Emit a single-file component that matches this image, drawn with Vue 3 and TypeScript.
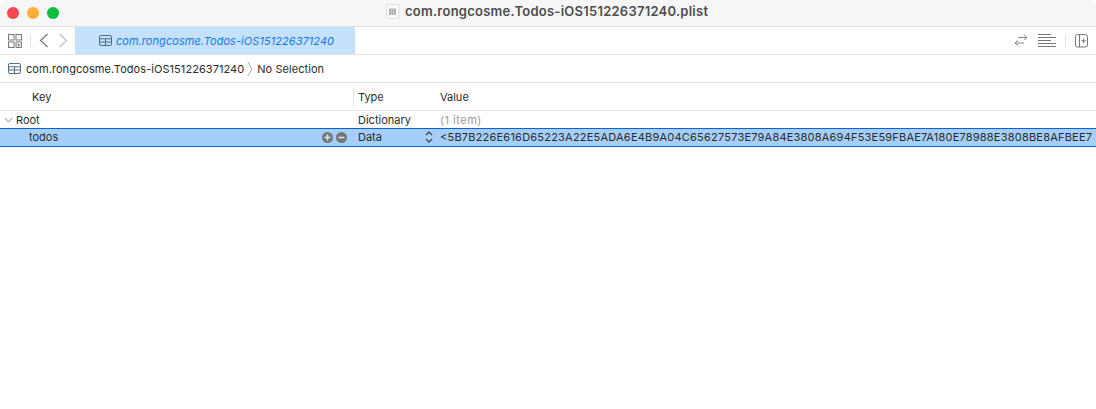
<script setup lang="ts">
const value = '<5B7B226E616D65223A22E5ADA6E4B9A04C65627573E79A84E3808A694F53E59FBAE7A180E78988E3808BE8AFBEE7'
const lights: string[] = ['#f8484e', '#fdae35', '#0fbc3c']
</script>

<template>
  <div class="win">
    <header class="title">
      <div class="lights"><i v-for="c in lights" :key="c" :style="{ background: c }"></i></div>
      <div class="title-c">
        <svg class="fileic" width="14" height="15" viewBox="0 0 14 15"><rect x=".5" y=".5" width="12.5" height="14" rx="1.5" fill="#fafafa" stroke="#dedede"/><rect x="3" y="4.5" width="7" height="6.5" fill="#b0b0b0"/><path d="M5.3 4.5V11M7.7 4.5V11" stroke="#cfcfcf"/></svg>
        <span>com.rongcosme.Todos-iOS151226371240.plist</span>
      </div>
    </header>

    <div class="toolbar">
      <svg class="grid" width="14" height="14" viewBox="0 0 14 14" fill="none" stroke="#777"><rect x=".5" y=".5" width="5.5" height="5.5"/><rect x="8" y=".5" width="5.5" height="5.5"/><rect x=".5" y="8" width="5.5" height="5.5"/><path d="M8 11v2.5h5.5V8H8zM10.7 9.5v3M9.2 11h3"/></svg>
      <span class="vsep"></span>
      <svg class="chev" width="10" height="15" viewBox="0 0 10 15" fill="none" stroke="#777" stroke-width="1.2"><path d="M8.5 1 1.5 7.5l7 6.5"/></svg>
      <svg class="chev fwd" width="10" height="15" viewBox="0 0 10 15" fill="none" stroke="#bdbdbd" stroke-width="1.2"><path d="M1.5 1l7 6.5-7 6.5"/></svg>
      <div class="tab">
        <svg width="13" height="11" viewBox="0 0 13 11" fill="none" stroke="#4d6f8c"><rect x=".5" y=".5" width="12" height="10" rx="1.5"/><path d="M.5 3.8h12M.5 7h12M6.5 3.8v6.7"/></svg>
        <span>com.rongcosme.Todos-iOS151226371240</span>
      </div>
      <div class="tools">
        <svg width="14" height="13" viewBox="0 0 14 13" fill="none" stroke="#888"><path d="M13 3.5H4M10 .8l3 2.7-3 2.5M1 9h9M4 6.5 1 9l3 2.7"/></svg>
        <svg class="lines" width="18" height="13" viewBox="0 0 18 13" fill="none" stroke="#777"><path d="M0 .5h13M0 3.5h18M0 6.5h13M0 9.5h18M0 12.5h18"/></svg>
        <span class="vsep r"></span>
        <svg width="13" height="14" viewBox="0 0 13 14" fill="none" stroke="#777"><rect x=".5" y=".5" width="12" height="12.5" rx="2"/><path d="M4.5 .5v12.5M8.6 4.5v4.5M6.4 6.8h4.4"/></svg>
      </div>
    </div>

    <div class="path">
      <svg width="13" height="11" viewBox="0 0 13 11" fill="none" stroke="#4d6f8c"><rect x=".5" y=".5" width="12" height="10" rx="1.5"/><path d="M.5 3.8h12M.5 7h12M6.5 3.8v6.7"/></svg>
      <span class="crumb">com.rongcosme.Todos-iOS151226371240</span>
      <svg class="sep" width="6" height="16" viewBox="0 0 6 16" fill="none" stroke="#aaa"><path d="M.8 1 5 8 .8 15"/></svg>
      <span>No Selection</span>
    </div>

    <div class="row head">
      <div class="c-key"><span class="key-label">Key</span></div>
      <div class="c-type"><span class="hl">Type</span></div>
      <div class="c-val"><span class="hl">Value</span></div>
    </div>

    <div class="row root">
      <div class="c-key">
        <svg class="disc" width="9" height="6" viewBox="0 0 9 6" fill="none" stroke="#888"><path d="M.8 1 4.5 5 8.2 1"/></svg>
        <span>Root</span>
      </div>
      <div class="c-type"><span>Dictionary</span></div>
      <div class="c-val gray"><span>(1 item)</span></div>
    </div>

    <div class="row sel">
      <div class="c-key">
        <span class="name">todos</span>
        <span class="btns">
          <svg width="11" height="11" viewBox="0 0 11 11"><circle cx="5.5" cy="5.5" r="5.5" fill="#767676"/><path d="M2.5 5.5h6M5.5 2.5v6" stroke="#d8e8f8" stroke-width="1.5"/></svg>
          <svg width="11" height="11" viewBox="0 0 11 11"><circle cx="5.5" cy="5.5" r="5.5" fill="#767676"/><path d="M2.5 5.5h6" stroke="#d8e8f8" stroke-width="1.5"/></svg>
        </span>
      </div>
      <div class="c-type between">
        <span>Data</span>
        <svg class="updown" width="8" height="12" viewBox="0 0 8 12" fill="none" stroke="#444" stroke-width="1.3"><path d="M1 4 4 1l3 3M1 8l3 3 3-3"/></svg>
      </div>
      <div class="c-val"><span class="val">{{ value }}</span></div>
    </div>
  </div>
</template>

<style>
html, body { margin: 0; background: #fff; }
</style>

<style scoped>
.win {
  width: 1096px;
  height: 409px;
  overflow: hidden;
  background: #fff;
  font-family: Inter, "Liberation Sans", sans-serif;
  font-size: 11px;
  color: #2b2b2b;
}
.title {
  height: 26px;
  display: flex;
  align-items: center;
  position: relative;
  background: #f6f6f6;
  border-bottom: 1px solid #e2e2e2;
  border-top-left-radius: 6px;
  border-top-right-radius: 6px;
}
.lights { display: flex; gap: 8px; padding-left: 7px; }
.lights i { width: 12px; height: 12px; border-radius: 50%; display: block; }
.title-c {
  position: absolute;
  left: 386px;
  top: 3px;
  display: flex;
  align-items: center;
  gap: 5px;
  font-size: 13px;
  font-weight: 600;
  letter-spacing: 0.25px;
  color: #4d4d4d;
}
.toolbar {
  height: 27px;
  display: flex;
  align-items: center;
  border-bottom: 1px solid #e2e2e2;
}
.grid { margin-left: 8px; }
.vsep { width: 1px; height: 12px; background: #e0e0e0; margin-left: 8px; }
.chev { margin-left: 8px; }
.chev.fwd { margin-left: 9px; }
.tab {
  margin-left: 7px;
  width: 280px;
  height: 27px;
  box-sizing: border-box;
  padding-left: 3px;
  background: #c5e1fb;
  display: flex;
  align-items: center;
  justify-content: center;
  gap: 4px;
  color: #1678e8;
  font-style: italic;
  letter-spacing: 0.06px;
}
.tools { margin-left: auto; display: flex; align-items: center; padding-right: 8px; }
.lines { margin-left: 10px; }
.vsep.r { margin: 0 9px 0 9px; }
.path {
  height: 27px;
  display: flex;
  align-items: center;
  padding-left: 8px;
  letter-spacing: 0.06px;
  border-bottom: 1px solid #e2e2e2;
}
.crumb { margin-left: 5px; }
.sep { margin: 0 4px 0 3px; }
.row { display: flex; align-items: center; }
.c-key { width: 354px; box-sizing: border-box; display: flex; align-items: center; height: 100%; }
.c-type { width: 83px; box-sizing: border-box; display: flex; align-items: center; padding-left: 4px; height: 100%; }
.c-val { flex: 1; min-width: 0; display: flex; align-items: center; padding-left: 3px; white-space: nowrap; overflow: hidden; height: 100%; }
.head { height: 27px; border-bottom: 1px solid #e2e2e2; }
.key-label { margin-left: 32px; }
.hl { border-left: 1px solid #e4e4e4; height: 17px; line-height: 17px; padding-left: 3px; margin-left: -5px; padding-left: 4px; margin-top: 2px; }
.root { height: 17px; }
.disc { margin-left: 4px; margin-right: 3px; }
.gray { color: #9a9a9a; letter-spacing: 0.5px; }
.sel {
  height: 19px;
  box-sizing: border-box;
  padding-bottom: 1px;
  background: #a5cffa;
  border-top: 1px solid #0a62d8;
  border-bottom: 1px solid #0a62d8;
}
.name { margin-left: 29px; }
.btns { margin-left: auto; margin-right: 7px; display: flex; gap: 3px; }
.between { justify-content: space-between; padding-right: 4px; }
.val { letter-spacing: 0.215px; }
</style>
